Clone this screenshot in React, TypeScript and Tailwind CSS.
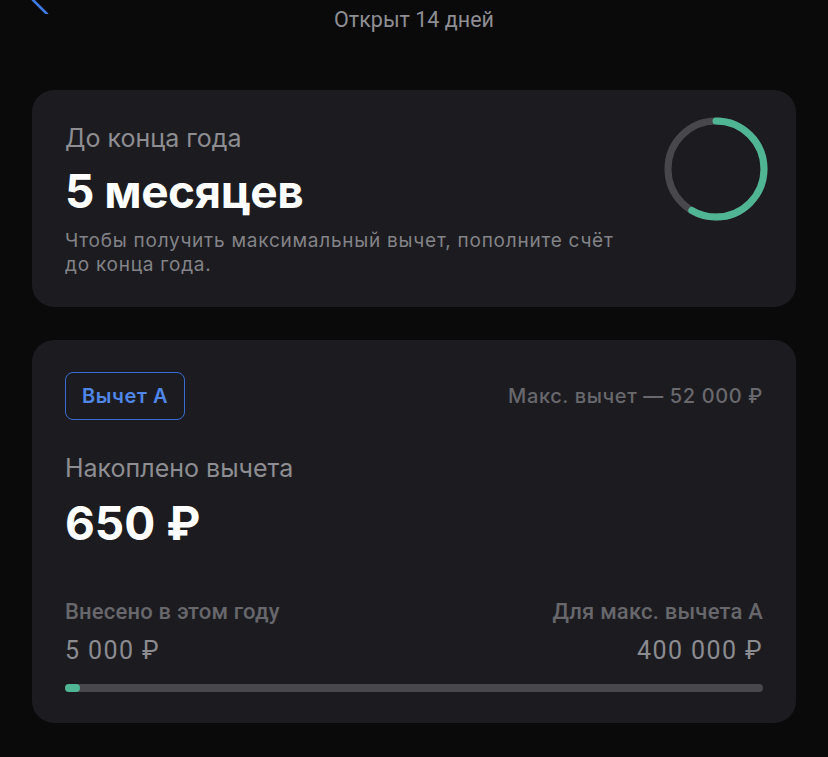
import React from 'react';

const sans = { fontFamily: 'Inter, "Noto Sans", sans-serif' };

function YearRing({ passed, total }: { passed: number; total: number }) {
  const r = 48;
  const c = 2 * Math.PI * r;
  const part = (passed / total) * c;

  return (
    <svg width="104" height="104" viewBox="0 0 104 104" className="shrink-0">
      <circle cx="52" cy="52" r={r} fill="none" stroke="#48484c" strokeWidth="7" />
      <circle
        cx="52"
        cy="52"
        r={r}
        fill="none"
        stroke="#4fb593"
        strokeWidth="7"
        strokeLinecap="round"
        strokeDasharray={`${part} ${c}`}
        transform="rotate(-90 52 52)"
      />
    </svg>
  );
}

export default function App() {
  const paid = 5000;
  const target = 400000;
  const pct = Math.max((paid / target) * 100, 2.2);

  return (
    <div className="min-h-[757px] w-full bg-[#0a0a0b] text-white overflow-hidden" style={sans}>
      {/* header */}
      <div className="relative h-[90px]">
        <svg width="24" height="30" viewBox="0 0 24 30" className="absolute left-[27px] -top-[16px]">
          <path d="M20 2 L6 16 L20 30" fill="none" stroke="#3f7ae0" strokeWidth="2.6" strokeLinecap="round" strokeLinejoin="round" />
        </svg>
        <div className="pt-[6px] text-center text-[21.5px] leading-[28px] text-[#8e8e93] font-['Roboto',sans-serif]">
          Открыт 14 дней
        </div>
      </div>

      {/* months left */}
      <div className="mx-[32px] rounded-[22px] bg-[#1c1c20] pl-[33px] pr-[28px] pt-[32px] pb-[30px] flex items-start justify-between">
        <div>
          <div className="text-[25px] leading-[32px] text-[#8d8d92]">До конца года</div>
          <div className="mt-[12px] text-[46px] leading-[50px] font-bold tracking-[-0.5px]">5 месяцев</div>
          <p className="mt-[13px] max-w-[565px] text-[19px] leading-[24px] tracking-[0.75px] text-[#838388]">
            Чтобы получить максимальный вычет, пополните счёт до конца года.
          </p>
        </div>
        <div className="-mt-[5px]">
          <YearRing passed={7} total={12} />
        </div>
      </div>

      {/* deduction */}
      <div className="mx-[32px] mt-[33px] rounded-[22px] bg-[#1c1c20] px-[33px] pt-[32px] pb-[31px]">
        <div className="flex items-center justify-between">
          <div className="h-[48px] px-[16px] flex items-center rounded-[8px] border border-[#3a6bd0] text-[20px] tracking-[0.6px] font-semibold text-[#4f86e8]">
            Вычет А
          </div>
          <div className="text-[20px] tracking-[0.6px] font-medium text-[#68686d]">Макс. вычет — 52 000 ₽</div>
        </div>

        <div className="mt-[32px] text-[25px] leading-[32px] text-[#8d8d92]">Накоплено вычета</div>
        <div className="mt-[14px] text-[46px] leading-[50px] font-bold">650 ₽</div>

        <div className="mt-[50px] flex justify-between text-[22px] leading-[28px] tracking-[0.2px] font-medium text-[#67676c] font-['Roboto',sans-serif]">
          <span>Внесено в этом году</span>
          <span>Для макс. вычета А</span>
        </div>
        <div className="mt-[9px] flex justify-between text-[25px] leading-[32px] tracking-[1.4px] text-[#8b8b90] font-['Roboto',sans-serif]">
          <span>5 000 ₽</span>
          <span>400 000 ₽</span>
        </div>

        <div className="mt-[17px] h-[8px] rounded-full bg-[#48484c]">
          <div className="h-full rounded-full bg-[#4fb593]" style={{ width: `${pct}%` }} />
        </div>
      </div>
    </div>
  );
}
